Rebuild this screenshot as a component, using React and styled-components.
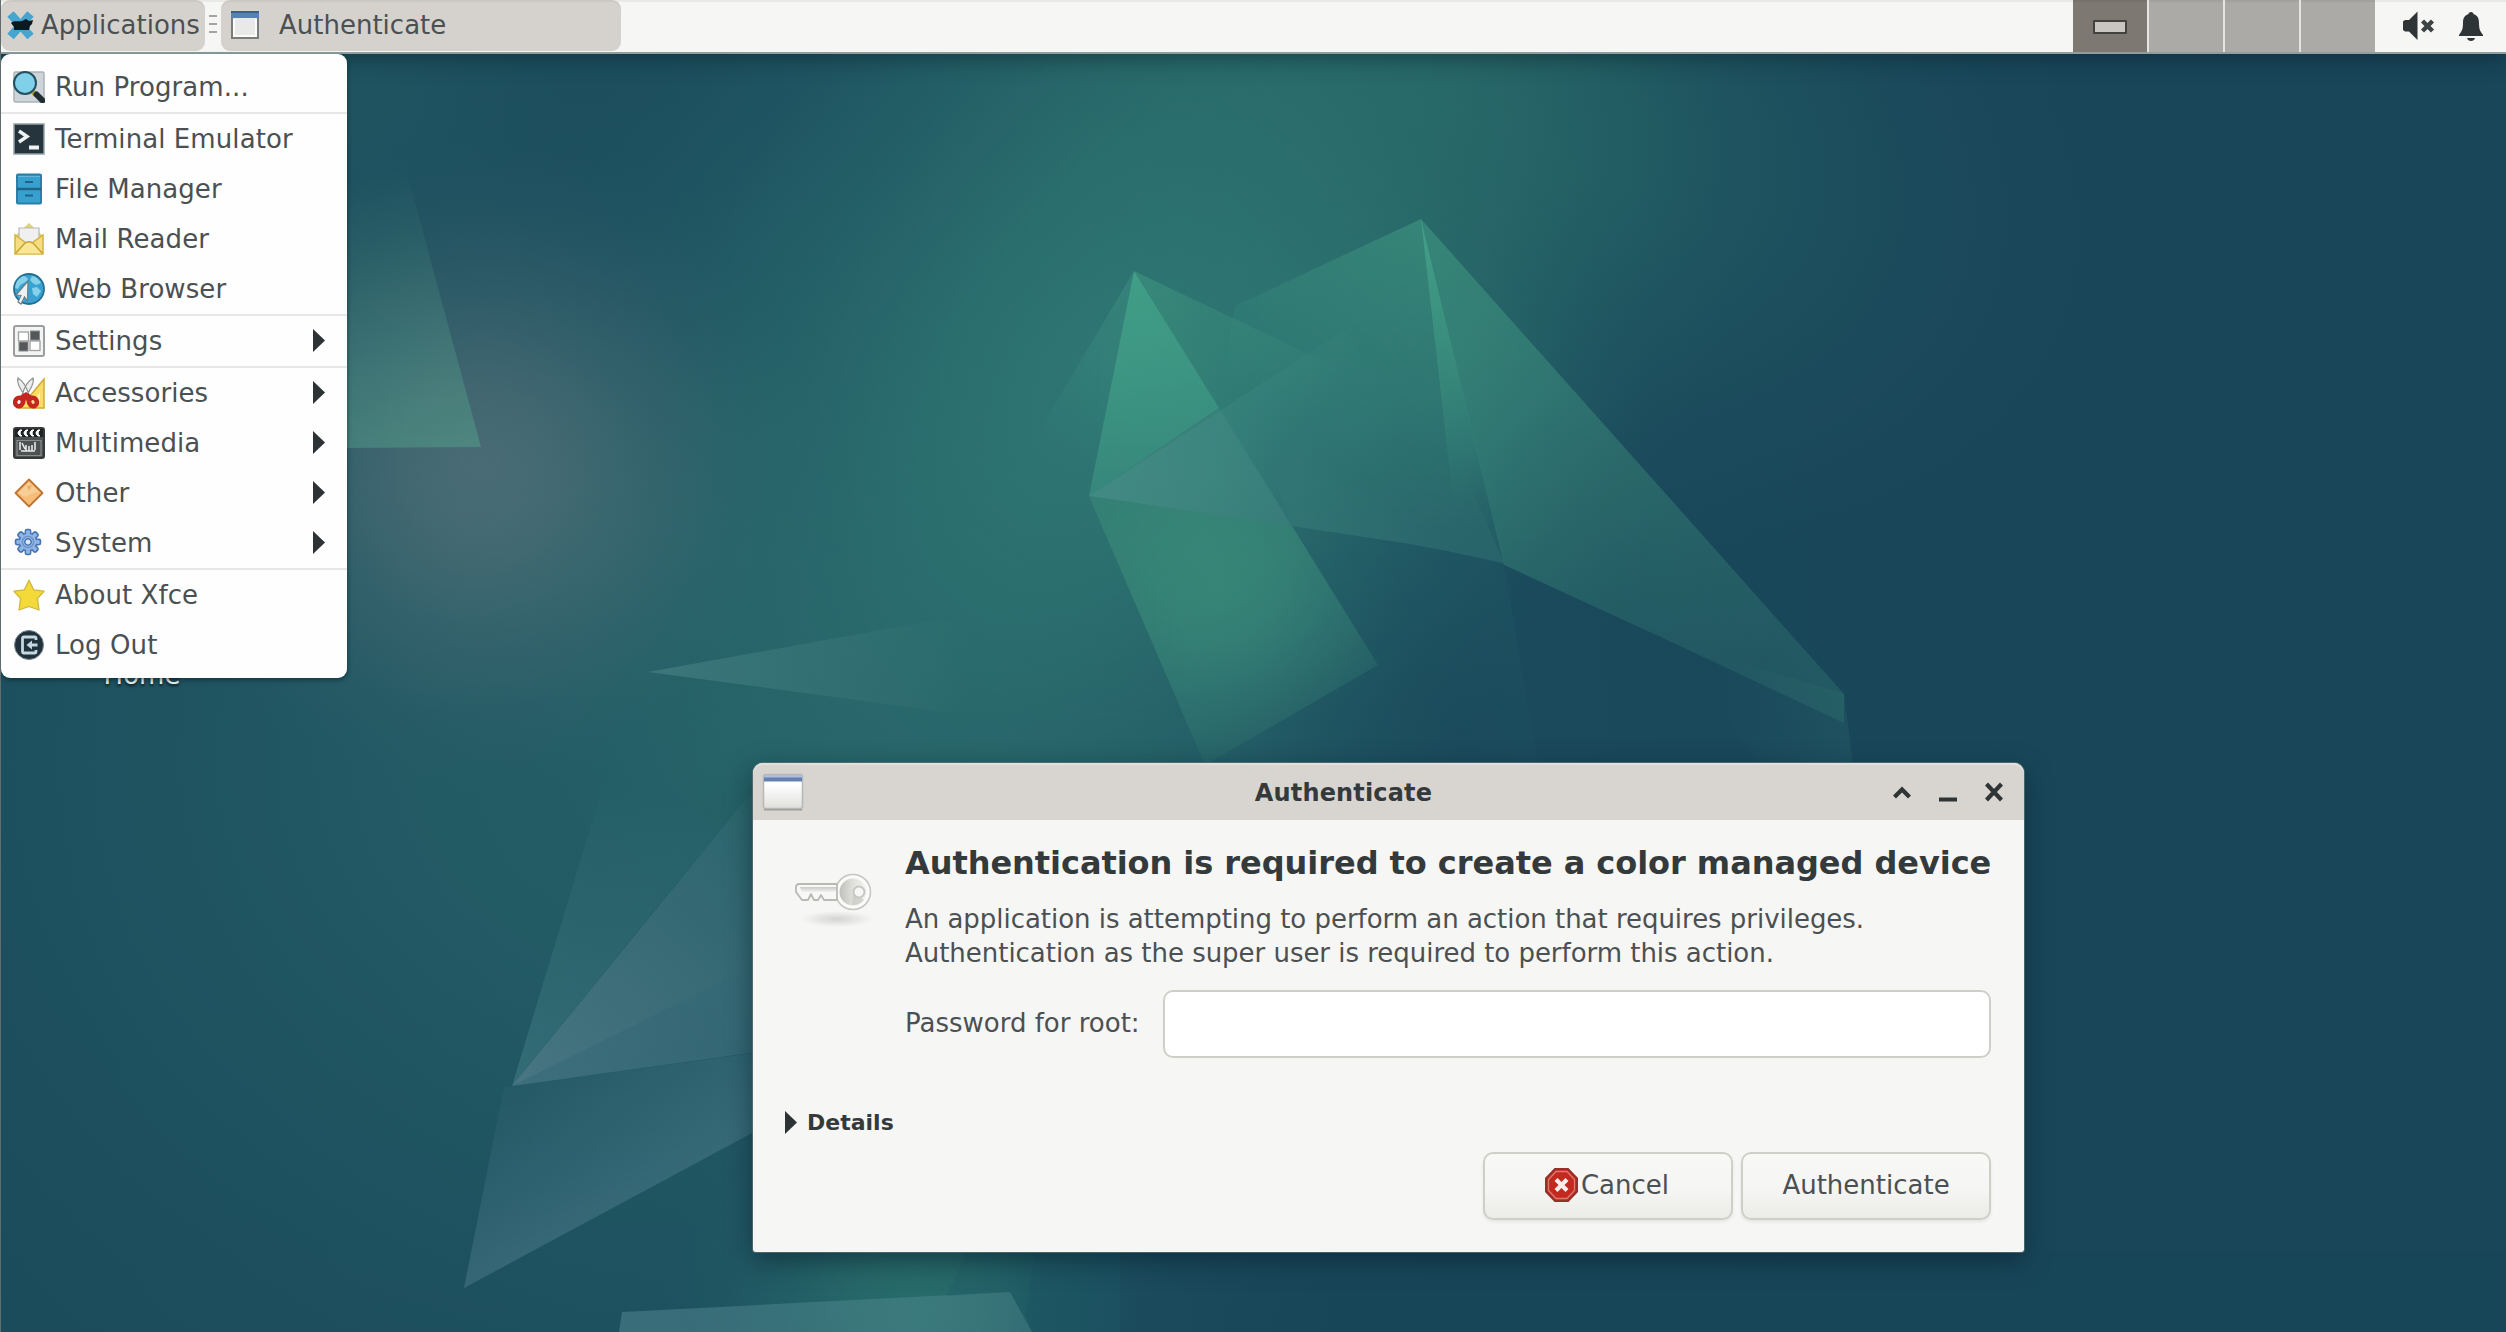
import React from "react";
import styled, { createGlobalStyle } from "styled-components";

const GlobalStyle = createGlobalStyle`
  * { box-sizing: border-box; }
  html, body { margin: 0; padding: 0; }
  body {
    width: 2506px;
    height: 1332px;
    overflow: hidden;
    background: #194759;
    font-family: "DejaVu Sans", sans-serif;
    font-size: 26px;
    color: #4b5052;
  }
`;

const Desktop = styled.main`
  position: relative;
  width: 2506px;
  height: 1332px;
  overflow: hidden;
  display: flex;
  flex-direction: column;

  &::after {
    content: "";
    position: absolute;
    inset: 0 auto 0 0;
    width: 1px;
    background: #606c6e;
  }
`;

const WallpaperArt = styled.svg`
  position: absolute;
  inset: 0;
  display: block;
`;

/* ---------- panel ---------- */

const Panel = styled.header`
  position: relative;
  height: 54px;
  flex: none;
  display: flex;
  align-items: stretch;
  padding-left: 1px;
  background: #f6f6f4;
  border-bottom: 2px solid #8f9f9f;
  box-shadow: inset 0 2px 0 rgba(0, 0, 0, 0.05), 0 4px 22px rgba(8, 28, 38, 0.5);
`;

const PanelButton = styled.button`
  width: ${(p) => p.$width}px;
  height: 51px;
  display: flex;
  align-items: center;
  gap: ${(p) => p.$gap}px;
  padding: 0 0 2px ${(p) => p.$inset}px;
  border: 0;
  border-radius: 9px;
  background: #d5d2cd;
  box-shadow: inset 0 2px 0 rgba(0, 0, 0, 0.04);
  font: inherit;
  color: inherit;
  white-space: nowrap;
`;

const Handle = styled.div`
  width: 16px;
  display: flex;
  flex-direction: column;
  gap: 6px;
  padding: 15px 0 0 4px;

  i {
    width: 8px;
    height: 2px;
    background: #a5a4a1;
  }
`;

const Spacer = styled.div`
  flex: 1;
`;

const Pager = styled.nav`
  display: flex;
  gap: 2px;
  background: #e4e4e1;
`;

const Workspace = styled.div`
  width: 74px;
  display: grid;
  place-items: center;
  padding-top: 2px;
  background: ${(p) => (p.$active ? "#7d7871" : "#abaaa7")};
  box-shadow: inset 0 2px 0 rgba(0, 0, 0, 0.05);
`;

const MiniWindow = styled.div`
  width: 34px;
  height: 14px;
  border: 2px solid #44423f;
  border-radius: 1px;
  background: #c9c5c1;
`;

const Tray = styled.div`
  width: 131px;
  display: flex;
  gap: 23px;
  padding: 11px 0 0 28px;
`;

/* ---------- applications menu ---------- */

const Menu = styled.ul`
  position: absolute;
  left: 1px;
  top: 54px;
  width: 346px;
  height: 624px;
  margin: 0;
  padding: 8px 0;
  list-style: none;
  background: #fdfefd;
  border-radius: 9px;
  box-shadow: 0 2px 5px rgba(6, 30, 40, 0.55);
`;

const MenuItem = styled.li`
  height: 50px;
  display: flex;
  align-items: center;
  padding: 0 22px 1px 12px;
  gap: 10px;
  white-space: nowrap;
  letter-spacing: 0.08px;

  span { flex: 1; }
  svg { flex: none; }
`;

const Separator = styled.li`
  height: 2px;
  background: #e6e8e8;
`;

const DesktopLabel = styled.div`
  position: absolute;
  left: 42px;
  top: 660px;
  width: 200px;
  text-align: center;
  font-size: 26px;
  line-height: 30px;
  color: #f2f6f6;
  text-shadow: 0 2px 3px rgba(0, 0, 0, 0.7);
`;

/* ---------- dialog ---------- */

const Dialog = styled.section`
  position: absolute;
  left: 753px;
  top: 763px;
  width: 1271px;
  height: 489px;
  display: flex;
  flex-direction: column;
  background: #f6f6f4;
  border-radius: 10px 10px 3px 3px;
  box-shadow: 0 0 0 1px rgba(90, 115, 118, 0.75), 0 8px 26px rgba(8, 28, 38, 0.55);
`;

const TitleBar = styled.div`
  height: 57px;
  display: flex;
  align-items: center;
  padding: 0 21px 0 9px;
  background: #d8d5d1;
  border-radius: 10px 10px 0 0;
  box-shadow: inset 0 2px 0 #e2e0dd;
`;

const Title = styled.h1`
  flex: 1;
  margin: 0;
  padding: 3px 10px 0 0;
  text-align: center;
  font-size: 24px;
  line-height: 30px;
  font-weight: bold;
  letter-spacing: 0.15px;
  color: #343a3b;
`;

const WindowControls = styled.div`
  display: flex;
  gap: 28px;
`;

const DialogBody = styled.div`
  flex: 1;
  display: grid;
  grid-template-columns: 120px 1fr;
  align-content: start;
  padding: 0 33px 0 32px;
`;

const KeyCell = styled.div`
  padding: 52px 0 0 9px;
`;

const Content = styled.div`
  min-width: 0;
`;

const Heading = styled.h2`
  margin: 0;
  padding-top: 23px;
  font-size: 32px;
  line-height: 40px;
  font-weight: bold;
  color: #343a3b;
  white-space: nowrap;
  letter-spacing: -0.05px;
`;

const Description = styled.p`
  margin: 19px 0 0;
  line-height: 34px;
  white-space: nowrap;
  letter-spacing: -0.03px;
`;

const PasswordRow = styled.label`
  display: flex;
  align-items: center;
  margin-top: 20px;

  span {
    width: 258px;
    padding-bottom: 2px;
    white-space: nowrap;
  }
`;

const PasswordInput = styled.input`
  flex: 1;
  min-width: 0;
  height: 68px;
  border: 2px solid #cfcfca;
  border-radius: 10px;
  background: #fff;
  font: inherit;
  outline: none;
`;

const Details = styled.div`
  grid-column: 1 / -1;
  display: flex;
  align-items: center;
  gap: 10px;
  height: 30px;
  margin-top: 49px;
  font-size: 22px;
  font-weight: bold;
  color: #343a3b;
`;

const Actions = styled.div`
  grid-column: 1 / -1;
  display: flex;
  justify-content: flex-end;
  gap: 8px;
  margin-top: 15px;
`;

const ActionButton = styled.button`
  width: 250px;
  height: 68px;
  display: flex;
  align-items: center;
  justify-content: center;
  gap: 3px;
  padding: 0 ${(p) => p.$inset || 0}px 3px 0;
  border: 2px solid #cfcfca;
  border-radius: 10px;
  background: linear-gradient(#f8f8f6, #f5f5f3 55%, #ebebe8);
  box-shadow: 0 2px 3px rgba(0, 0, 0, 0.07);
  font: inherit;
  color: inherit;
`;

/* ---------- icons ---------- */

const Icon = ({ children, w = 32, h = 32, box }) => (
  <svg width={w} height={h} viewBox={box || `0 0 ${w} ${h}`} fill="none">
    {children}
  </svg>
);

const XfceIcon = () => (
  <Icon w={30} h={30}>
    <path d="M4.500 4L24.500 26.500M24.500 4L4.500 26.500" stroke="#45a5cf" strokeWidth="8.500" />
    <path d="M5 13 C8 10 12 12 16 11 L20 9 L23 11 L27 10 L26 14 L24 16 L23 20 L18 20 L8 20 L8 17 Z" fill="#0b1a22" />
  </Icon>
);

const TaskIcon = () => (
  <Icon w={28} h={30}>
    <rect x="1" y="2" width="26" height="26" fill="#e9eae8" stroke="#7b7d7c" strokeWidth="2" />
    <path d="M0 1h28v7H0z" fill="#5580bd" />
    <path d="M0 1h28v2H0z" fill="#3f5f8e" />
    <path d="M3 9v17h22V9" stroke="#fbfbfa" strokeWidth="2" />
  </Icon>
);

const MutedIcon = () => (
  <Icon w={32} h={30}>
    <path d="M0 10.500 L2 9 H6 L14.500 0.500 V29 L6 20.500 H2 L0 19 Z" fill="#2f3536" />
    <path d="M19.500 10l10 10M29.500 10l-10 10" stroke="#3d4243" strokeWidth="4.400" />
  </Icon>
);

const BellIcon = () => (
  <Icon w={26} h={31}>
    <path d="M13 1 C14.500 1 15.500 2 15.500 3 C20 4.500 21 8 21 12 C21 18 22 20 25 24 V25 H1 V24 C4 20 5 18 5 12 C5 8 6 4.500 10.500 3 C10.500 2 11.500 1 13 1 Z" fill="#2f3536" />
    <path d="M9 27 H17 C16.500 29 15 30 13 30 C11 30 9.500 29 9 27 Z" fill="#2f3536" />
  </Icon>
);

const RunIcon = () => (
  <Icon>
    <rect x="1" y="1" width="30" height="30" rx="1.500" fill="#cdd4da" stroke="#aab2b6" strokeWidth="1.500" />
    <path d="M19 20l4 4" stroke="#b3a43c" strokeWidth="5" />
    <path d="M23.500 23.500l6 6" stroke="#1f2c31" strokeWidth="6" strokeLinecap="round" />
    <circle cx="12" cy="12" r="11" fill="#7fd0e8" stroke="#24505f" strokeWidth="2" />
  </Icon>
);

const TerminalIcon = () => (
  <Icon>
    <rect x="1" y="1" width="30" height="30" fill="#26353d" stroke="#93a0a6" strokeWidth="1.500" />
    <path d="M6 8l8 5.500L6 19" stroke="#eef2f3" strokeWidth="3.500" />
    <path d="M16 24.500h10" stroke="#eef2f3" strokeWidth="4" />
  </Icon>
);

const FilesIcon = () => (
  <Icon>
    <rect x="4" y="1.500" width="24" height="29" rx="1" fill="#38a0cf" stroke="#2b7ea8" strokeWidth="2" />
    <path d="M4 16h24" stroke="#1c6489" strokeWidth="2.500" />
    <path d="M5 3.500h22" stroke="#60b8dd" strokeWidth="1" />
    <path d="M12 9h8M12 22.500h8" stroke="#1c6489" strokeWidth="2" />
  </Icon>
);

const MailIcon = () => (
  <Icon>
    <path d="M2 13 L16 0 L30 13 Z" fill="#ddd277" />
    <path d="M6 5h20v17H6z" fill="#f0f0f0" stroke="#b9b9bb" strokeWidth="1.200" />
    <path d="M2 12v19h28V12L16 22 Z" fill="#f6dd80" stroke="#d3b33f" strokeWidth="1.500" />
    <path d="M2.500 30.500l9-10q4.500-3.500 9 0l9 10" stroke="#c7a23a" strokeWidth="1.500" fill="#fae695" />
  </Icon>
);

const WebIcon = () => (
  <Icon>
    <circle cx="16" cy="16" r="15" fill="#38a3d2" stroke="#256f92" strokeWidth="1.800" />
    <path d="M10 3q4 0 5 4l-4 3q-4 1-6 6l-3-1q1-9 8-12zM19 3q6 1 9 7l-5 2q-4-2-6-5zM19 15l5-1 4 4-4 6-4-3zM5 20l5 2 1 6q-5-2-6-8z" fill="#85d1ea" />
    <path d="M15 8L14.500 28L11.500 24L8 31L5 29L8 22.500L3 22Z" fill="#eef1f2" stroke="#6d7d84" strokeWidth="1.200" />
  </Icon>
);

const SettingsIcon = () => (
  <Icon>
    <rect x="1" y="1" width="30" height="30" rx="2" fill="#f3f4f4" stroke="#9b9d9e" strokeWidth="2" />
    <rect x="5.500" y="7" width="10" height="9" fill="#fff" stroke="#9fa1a2" strokeWidth="1.300" />
    <rect x="17" y="16" width="10" height="9.500" fill="#fff" stroke="#9fa1a2" strokeWidth="1.300" />
    <rect x="17.500" y="6" width="9" height="9" fill="#55585a" stroke="#888" />
    <rect x="6" y="17" width="9" height="9" fill="#55585a" stroke="#888" />
  </Icon>
);

const AccessoriesIcon = () => (
  <Icon>
    <path d="M31 2V31H7Z" fill="#f8de62" stroke="#d2a932" strokeWidth="1.500" />
    <path d="M27 15v12h-8z" fill="#fdf0a8" />
    <path d="M5 1q-2 6 8 19l3-2Q12 5 5 1zM20 1q2 6-8 19l-3-2Q13 5 20 1z" fill="#eceded" stroke="#8d9090" strokeWidth="1.200" />
    <ellipse cx="6" cy="25" rx="3.800" ry="4.300" transform="rotate(25 6 25)" stroke="#c52620" strokeWidth="4.600" fill="#fff" />
    <ellipse cx="20" cy="25" rx="3.800" ry="4.300" transform="rotate(-25 20 25)" stroke="#c52620" strokeWidth="4.600" fill="#f4d99a" />
    <path d="M7 19l6-4 6 4-6 5z" fill="#c52620" />
  </Icon>
);

const MultimediaIcon = () => (
  <Icon>
    <rect x="1" y="1" width="30" height="30" rx="2" fill="#4d5152" stroke="#35393a" strokeWidth="2" />
    <path d="M2 2h28v8H2z" fill="#1e2223" />
    <path d="M7 3q-4 3 0 6h2q-4-3 0-6zM13 3q-4 3 0 6h2q-4-3 0-6zM19 3q-4 3 0 6h2q-4-3 0-6zM25 3q-4 3 0 6h2q-4-3 0-6z" fill="#fff" stroke="#fff" />
    <path d="M4 13.500h24v15H4z" stroke="#888c8d" strokeWidth="1.200" />
    <path d="M7 15v8M9 16l3 6M13 18v6M16 19v5M19 18v6M22 15v8M8 24h14" stroke="#e6e8e8" strokeWidth="1.600" />
  </Icon>
);

const OtherIcon = () => (
  <Icon>
    <path d="M16 2.500L29.500 16L16 29.500L2.500 16Z" fill="#f5bd78" stroke="#bf7430" strokeWidth="1.800" strokeLinejoin="round" />
    <path d="M16 5L27 16L23 15L12 20L5 16Z" fill="#fad6a4" opacity="0.700" />
    <path d="M14 9l5-1-3 6z" fill="#e79b4d" opacity="0.700" />
  </Icon>
);

const SystemIcon = () => (
  <Icon>
    <g transform="translate(15 15)">
      {[0, 45, 90, 135].map((a) => (
        <rect key={a} x="-2.600" y="-12.500" width="5.200" height="25" rx="1.500" transform={`rotate(${a})`} fill="#8fb3e2" stroke="#4474b4" strokeWidth="1.600" />
      ))}
      <circle r="8.800" fill="#8fb3e2" stroke="#4474b4" strokeWidth="1.300" />
      {[0, 45, 90, 135].map((a) => (
        <rect key={a} x="-1.900" y="-11" width="3.800" height="22" transform={`rotate(${a})`} fill="#8fb3e2" />
      ))}
      <circle r="5.500" fill="#a9c5ea" stroke="#6a93cb" strokeWidth="1.500" />
      <circle r="3.200" fill="#dfe9f6" stroke="#4474b4" strokeWidth="1.500" />
    </g>
  </Icon>
);

const StarIcon = () => (
  <Icon>
    <path d="M16 1.200L20.600 10.800L31 12.200L24.400 19.600L26 31L16 27.500L6 31L7.600 19.600L1 12.200L11.400 10.800Z" fill="#f3da38" stroke="#ceb73c" strokeWidth="1.300" strokeLinejoin="round" />
  </Icon>
);

const LogoutIcon = () => (
  <Icon>
    <circle cx="16" cy="16" r="14.500" fill="#22323c" stroke="#7b8990" strokeWidth="1" />
    <path d="M23 11V9.500q0-1.500-1.500-1.500H11Q9.500 8 9.500 9.500v13q0 1.500 1.500 1.500h10.500q1.500 0 1.500-1.500V21" stroke="#c4d7e2" strokeWidth="2.800" />
    <path d="M13.500 16l5.500-4.500v3h5.500v3H19v3z" fill="#c4d7e2" />
  </Icon>
);

const Arrow = () => (
  <Icon w={12} h={23}>
    <path d="M0 0L12 11.500L0 23Z" fill="#2d3334" />
  </Icon>
);

const WindowIcon = () => (
  <Icon w={42} h={38}>
    <defs>
      <linearGradient id="win" x1="0" y1="0" x2="0" y2="1">
        <stop offset="0.300" stopColor="#fff" />
        <stop offset="1" stopColor="#dfdfdc" />
      </linearGradient>
    </defs>
    <path d="M2 36.500h38" stroke="#9a9a96" strokeWidth="2" />
    <rect x="1.500" y="1.500" width="39" height="34" rx="2" fill="url(#win)" stroke="#b6b7b6" strokeWidth="1.500" />
    <path d="M2 2h38v3H2z" fill="#aebedb" />
    <path d="M2 4.500h38v4H2z" fill="#6480b0" />
  </Icon>
);

const KeyIcon = () => (
  <Icon w={80} h={56}>
    <defs>
      <linearGradient id="key" x1="0" y1="0" x2="0" y2="1">
        <stop offset="0" stopColor="#c9c9c6" />
        <stop offset="1" stopColor="#f2f2f0" />
      </linearGradient>
      <linearGradient id="keyBow" x1="0" y1="0" x2="1" y2="0">
        <stop offset="0" stopColor="#bfbfbc" />
        <stop offset="0.500" stopColor="#e0e0dd" />
        <stop offset="1" stopColor="#f3f3f1" />
      </linearGradient>
      <radialGradient id="keyShade">
        <stop offset="0" stopColor="#000" stopOpacity="0.140" />
        <stop offset="1" stopColor="#000" stopOpacity="0" />
      </radialGradient>
    </defs>
    <ellipse cx="43" cy="47" rx="36" ry="8" fill="url(#keyShade)" />
    <circle cx="59" cy="20" r="17.500" fill="#fbfbfa" stroke="#c4c4c1" strokeWidth="1.500" />
    <path d="M4 12H43V28H30L27 23L24 28H20L17 22L14 28H8L2 20V14Z" fill="#f8f8f7" stroke="#b9b9b6" strokeWidth="1.800" strokeLinejoin="round" />
    <path d="M6 15H42V20H8Z" fill="url(#key)" />
    <circle cx="59" cy="20" r="13.500" fill="url(#keyBow)" />
    <path d="M59 20L58 33A13.500 13.500 0 0 0 70 28Z" fill="#c3c3c0" opacity="0.600" />
    <circle cx="65" cy="20" r="5.500" fill="#f6f6f4" stroke="#c6c6c3" strokeWidth="2" />
  </Icon>
);

const StopIcon = () => (
  <Icon w={33} h={34}>
    <path d="M10 1H23L32 10.500V23.500L23 33H10L1 23.500V10.500Z" fill="#c4291f" stroke="#96302a" strokeWidth="2" />
    <path d="M11 3.500H22L29.500 11.500V22.500L22 30.500H11L3.500 22.500V11.500Z" stroke="#dc7a70" strokeWidth="1.300" />
    <path d="M11 11.500L22 22.500M22 11.500L11 22.500" stroke="#f8eeee" strokeWidth="4.200" />
  </Icon>
);

/* ---------- wallpaper ---------- */

const Fade = ({ id, from, to, color, a, b = 0 }) => (
  <linearGradient id={id} gradientUnits="userSpaceOnUse" x1={from[0]} y1={from[1]} x2={to[0]} y2={to[1]}>
    <stop offset="0" stopColor={color} stopOpacity={a} />
    <stop offset="1" stopColor={color} stopOpacity={b} />
  </linearGradient>
);

const Glow = ({ id, at, r, color, a, angle = 0, sy = 1 }) => (
  <radialGradient
    id={id}
    gradientUnits="userSpaceOnUse"
    cx="0"
    cy="0"
    r={r}
    gradientTransform={`translate(${at[0]} ${at[1]}) rotate(${angle}) scale(1 ${sy})`}
  >
    <stop offset="0" stopColor={color} stopOpacity={a} />
    <stop offset="0.250" stopColor={color} stopOpacity={a * 0.8} />
    <stop offset="0.500" stopColor={color} stopOpacity={a * 0.43} />
    <stop offset="0.750" stopColor={color} stopOpacity={a * 0.13} />
    <stop offset="0.900" stopColor={color} stopOpacity={a * 0.03} />
    <stop offset="1" stopColor={color} stopOpacity="0" />
  </radialGradient>
);

const GLOWS = [
  { id: "g1", at: [700, 760], r: 1050, color: "#2a686c", a: 0.62, sy: 0.78 },
  { id: "g2", at: [1120, 360], r: 800, color: "#35867b", a: 0.72, angle: -62, sy: 0.7 },
  { id: "g3", at: [1450, 100], r: 680, color: "#2f7b6f", a: 0.46, angle: 20, sy: 0.62 },
  { id: "g4", at: [480, 468], r: 330, color: "#7b868c", a: 0.45 },
  { id: "g5", at: [330, 60], r: 260, color: "#276468", a: 0.3 },
  { id: "g6", at: [920, 1310], r: 260, color: "#2f7f74", a: 0.6 },
  { id: "g7", at: [1360, 430], r: 300, color: "#35877b", a: 0.36 },
];

const SHARDS = [
  { points: "1134,271 1010,480 1089,496", from: [1120, 290], to: [1050, 450], color: "#4aa48d", a: 0.28 },
  { points: "1421,219 1235,306 1217,410 1292,526 1404,543 1447,551 1504,563", from: [1421, 219], to: [1270, 410], color: "#45a287", a: 0.5 },
  { points: "1134,271 1292,526 1460,560 1344,371", from: [1134, 271], to: [1310, 420], color: "#44a184", a: 0.46 },
  { points: "1089,496 1344,330 1504,563 1447,551 1404,543 1292,526", from: [1089, 496], to: [1400, 480], color: "#4f9b90", a: 0.32 },
  { points: "1292,526 1404,543 1447,551 1504,563 1450,440 1260,440", from: [1400, 560], to: [1415, 450], color: "#38787a", a: 0.36 },
  { points: "1134,271 1089,496 1219,408", from: [1134, 271], to: [1150, 520], color: "#4db894", a: 0.62, b: 0.25 },
  { points: "1089,496 1219,408 1292,526", from: [1089, 496], to: [1290, 500], color: "#5fa899", a: 0.26, b: 0.18 },
  { points: "1421,219 1460,560 1504,563", from: [1421, 219], to: [1480, 500], color: "#4cb592", a: 0.55 },
  { points: "1421,219 1844,694 1844,723 1665,639 1504,565", from: [1633, 457], to: [1490, 585], color: "#42937f", a: 0.24, b: 0.12 },
  { points: "1421,219 1844,694 1844,723 1665,639 1504,565", from: [1421, 219], to: [1790, 640], color: "#45a287", a: 0.38 },
  { points: "1844,694 1853,765 1760,765 1665,639", from: [1850, 730], to: [1720, 740], color: "#3b7f7a", a: 0.16 },
  { points: "1504,563 1538,765 1400,765 1404,543", from: [1520, 640], to: [1430, 690], color: "#2c6c70", a: 0.12 },
  { points: "1089,496 1292,526 1378,665 1205,765", from: [1160, 500], to: [1290, 740], color: "#3f9079", a: 0.38, b: 0.06 },
  { points: "648,672 975,613 975,716", from: [648, 672], to: [965, 664], color: "#5a9494", a: 0.42 },
  { points: "390,110 481,447 340,448 340,110", from: [440, 447], to: [385, 170], color: "#55a48c", a: 0.46 },
  { points: "512,1086 617,740 800,690 760,780", from: [512, 1086], to: [605, 780], color: "#4f8a92", a: 0.42 },
  { points: "512,1086 737,810 800,740 800,942 750,968", from: [512, 1086], to: [790, 745], color: "#7096a4", a: 0.5 },
  { points: "512,1086 750,968 800,942 800,1046 750,1053", from: [512, 1086], to: [830, 990], color: "#6690a0", a: 0.42, b: 0.2 },
  { points: "464,1288 504,1087 800,1047 800,1107", from: [607, 1211], to: [520, 1047], color: "#62909f", a: 0.34 },
  { points: "622,1312 740,1306 1010,1292 1032,1332 619,1332", from: [622, 1312], to: [1030, 1312], color: "#6298a0", a: 0.4, b: 0.28 },
];

const Wallpaper = () => (
  <WallpaperArt width="2506" height="1332" viewBox="0 0 2506 1332">
    <defs>
      <linearGradient id="base" x1="0" y1="0" x2="1" y2="0">
        <stop offset="0" stopColor="#1b4c5c" />
        <stop offset="0.300" stopColor="#1c4e5e" />
        <stop offset="0.700" stopColor="#19475a" />
        <stop offset="1" stopColor="#194659" />
      </linearGradient>
      <Fade id="rightShade" from={[1000, 0]} to={[1330, 0]} color="#184659" a={0} b={0.92} />
      <Fade id="deep" from={[1240, 0]} to={[1540, 0]} color="#19495b" a={0} b={0.72} />
      <Glow id="column" at={[1220, 590]} r={210} color="#3f957f" a={0.52} sy={1} />
      {GLOWS.map((g) => (
        <Glow key={g.id} {...g} />
      ))}
      {SHARDS.map((s, i) => (
        <Fade key={i} id={`s${i}`} {...s} />
      ))}
    </defs>
    <rect width="2506" height="1332" fill="url(#base)" />
    {GLOWS.map((g) => (
      <rect key={g.id} width="2506" height="1332" fill={`url(#${g.id})`} />
    ))}
    <path d="M1292 526L1404 543L1447 551L1501 563L1665 639L1844 723L1853 800H1205V765L1378 665Z" fill="url(#deep)" />
    <rect y="1250" x="980" width="1526" height="82" fill="url(#rightShade)" />
    {SHARDS.map((s, i) => (
      <polygon key={i} points={s.points} fill={`url(#s${i})`} />
    ))}
    <polygon points="1089,496 1292,526 1378,665 1205,765" fill="url(#column)" />
    <polygon points="968,1250 1035,1250 1026,1317 1010,1292 947,1296" fill="#1d5664" opacity="0.250" />
    <polygon points="1035,1250 1120,1250 1120,1332 1032,1332 1026,1315" fill="#1c5362" opacity="0.550" />
  </WallpaperArt>
);

/* ---------- page ---------- */

const MENU = [
  [RunIcon, "Run Program..."],
  null,
  [TerminalIcon, "Terminal Emulator"],
  [FilesIcon, "File Manager"],
  [MailIcon, "Mail Reader"],
  [WebIcon, "Web Browser"],
  null,
  [SettingsIcon, "Settings", true],
  null,
  [AccessoriesIcon, "Accessories", true],
  [MultimediaIcon, "Multimedia", true],
  [OtherIcon, "Other", true],
  [SystemIcon, "System", true],
  null,
  [StarIcon, "About Xfce"],
  [LogoutIcon, "Log Out"],
];

export default function App() {
  return (
    <Desktop>
      <GlobalStyle />
      <Wallpaper />
      <DesktopLabel>Home</DesktopLabel>

      <Panel>
        <PanelButton $width={204} $inset={5} $gap={5}>
          <XfceIcon />
          Applications
        </PanelButton>
        <Handle>
          <i />
          <i />
          <i />
        </Handle>
        <PanelButton $width={400} $inset={10} $gap={20}>
          <TaskIcon />
          Authenticate
        </PanelButton>
        <Spacer />
        <Pager>
          <Workspace $active>
            <MiniWindow />
          </Workspace>
          <Workspace />
          <Workspace />
          <Workspace />
        </Pager>
        <Tray>
          <MutedIcon />
          <BellIcon />
        </Tray>
      </Panel>

      <Menu>
        {MENU.map((entry, i) => {
          if (!entry) return <Separator key={i} />;
          const [Glyph, label, nested] = entry;
          return (
            <MenuItem key={i}>
              <Glyph />
              <span>{label}</span>
              {nested && <Arrow />}
            </MenuItem>
          );
        })}
      </Menu>

      <Dialog>
        <TitleBar>
          <WindowIcon />
          <Title>Authenticate</Title>
          <WindowControls>
            <Icon w={18} h={20}>
              <path d="M1.500 15L9 7.500L16.500 15" stroke="#2f3435" strokeWidth="4.200" />
            </Icon>
            <Icon w={18} h={20}>
              <path d="M0 17.500H18" stroke="#2f3435" strokeWidth="4" />
            </Icon>
            <Icon w={18} h={20}>
              <path d="M1.500 2L16.500 18M16.500 2L1.500 18" stroke="#2f3435" strokeWidth="4.200" />
            </Icon>
          </WindowControls>
        </TitleBar>
        <DialogBody>
          <KeyCell>
            <KeyIcon />
          </KeyCell>
          <Content>
            <Heading>Authentication is required to create a color managed device</Heading>
            <Description>
              An application is attempting to perform an action that requires privileges.
              <br />
              Authentication as the super user is required to perform this action.
            </Description>
            <PasswordRow>
              <span>Password for root:</span>
              <PasswordInput type="password" />
            </PasswordRow>
          </Content>
          <Details>
            <Arrow />
            Details
          </Details>
          <Actions>
            <ActionButton $inset={2}>
              <StopIcon />
              Cancel
            </ActionButton>
            <ActionButton>Authenticate</ActionButton>
          </Actions>
        </DialogBody>
      </Dialog>
    </Desktop>
  );
}
